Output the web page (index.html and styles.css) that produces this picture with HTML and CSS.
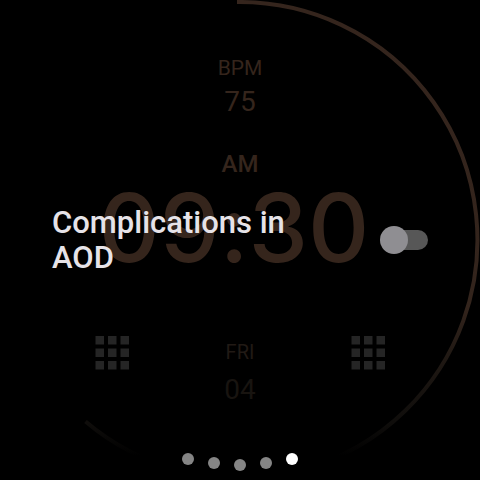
FILE: index.html
```html
<!DOCTYPE html>
<html lang="en">
<head>
<meta charset="utf-8">
<meta name="viewport" content="width=device-width, initial-scale=1">
<title>Watch face settings</title>
<link rel="stylesheet" href="styles.css">
</head>
<body>
<main class="screen">
  <svg class="ring" viewBox="0 0 480 480" aria-hidden="true">
    <defs>
      <linearGradient id="fade" gradientUnits="userSpaceOnUse" x1="0" y1="0" x2="0" y2="480">
        <stop offset="0" stop-color="#35251d"/>
        <stop offset=".64" stop-color="#33241c"/>
        <stop offset=".75" stop-color="#1f1813"/>
        <stop offset=".88" stop-color="#0f0d0b"/>
        <stop offset=".95" stop-color="#000"/>
      </linearGradient>
    </defs>
    <path d="M237 2A238 238 0 1 1 85.500 421.500" fill="none" stroke="url(#fade)" stroke-width="4"/>
  </svg>

  <section class="face">
    <div class="label">BPM</div>
    <div class="value">75</div>
    <div class="period">AM</div>
    <div class="time">09:30</div>
    <div class="bottom">
      <svg class="apps" viewBox="0 0 34 34" aria-hidden="true"><path d="M.5 0h8.500v8.500H.5zM13 0h8.500v8.500H13zM25.500 0H34v8.500h-8.500zM.5 12.500h8.500V21H.5zM13 12.500h8.500V21H13zM25.500 12.500H34V21h-8.500zM.5 25h8.500v8.500H.5zM13 25h8.500v8.500H13zM25.500 25H34v8.500h-8.500z"/></svg>
      <div class="date">
        <div class="weekday">FRI</div>
        <div class="day">04</div>
      </div>
      <svg class="apps" viewBox="0 0 34 34" aria-hidden="true"><path d="M.5 0h8.500v8.500H.5zM13 0h8.500v8.500H13zM25.500 0H34v8.500h-8.500zM.5 12.500h8.500V21H.5zM13 12.500h8.500V21H13zM25.500 12.500H34V21h-8.500zM.5 25h8.500v8.500H.5zM13 25h8.500v8.500H13zM25.500 25H34v8.500h-8.500z"/></svg>
    </div>
  </section>

  <div class="setting">
    <label class="setting-label" for="aod">Complications in AOD</label>
    <input class="switch" id="aod" type="checkbox" role="switch">
  </div>

  <ol class="pages" aria-label="Page 5 of 5">
    <li class="dot"></li>
    <li class="dot low"></li>
    <li class="dot lowest"></li>
    <li class="dot low"></li>
    <li class="dot current"></li>
  </ol>
</main>
</body>
</html>
```
FILE: styles.css
```css
* {
  box-sizing: border-box;
}

body {
  margin: 0;
  background: #000;
  color: #35251c;
  font-family: Roboto, "Liberation Sans", sans-serif;
}

.screen {
  display: grid;
  grid-template-columns: minmax(0, 1fr);
  min-height: 100vh;
}

.screen > * {
  grid-area: 1 / 1;
}

.ring {
  display: block;
  width: 100%;
}

.face {
  padding-top: 53px;
  text-align: center;
}

.label {
  font-size: 21px;
  line-height: 30px;
}

.value {
  font-size: 28px;
  line-height: 38px;
}

.period {
  margin-top: 29px;
  font-size: 24px;
  line-height: 28px;
  font-weight: 500;
}

.time {
  padding-right: 12px;
  font-family: Inter, Roboto, sans-serif;
  font-feature-settings: "calt" 0;
  font-size: 95px;
  line-height: 100px;
  font-weight: 500;
}

.bottom {
  display: flex;
  justify-content: space-between;
  align-items: flex-start;
  margin-top: 58px;
  padding: 0 95px;
}

.apps {
  width: 34px;
  height: 34px;
  fill: #252525;
}

.weekday {
  font-size: 20px;
  line-height: 32px;
  color: #211a15;
}

.day {
  font-size: 28px;
  line-height: 44px;
  color: #181410;
}

.setting {
  display: flex;
  align-items: center;
  gap: 40px;
  padding: 0 52px;
}

.setting-label {
  flex: 1;
  font-size: 31px;
  line-height: 35px;
  font-weight: 500;
  color: #e6e3e8;
}

.switch {
  appearance: none;
  display: grid;
  align-items: center;
  flex: none;
  width: 48px;
  height: 28px;
  margin: 0;
}

.switch::before,
.switch::after {
  content: "";
  grid-area: 1 / 1;
}

.switch::before {
  height: 20px;
  margin-left: 8px;
  border-radius: 10px;
  background: #575757;
}

.switch::after {
  width: 28px;
  height: 28px;
  border-radius: 50%;
  background: #8f8e92;
}

.switch:checked::after {
  justify-self: end;
}

.pages {
  display: flex;
  align-self: end;
  justify-content: center;
  gap: 14px;
  height: 27px;
  margin: 0;
  padding: 0;
  list-style: none;
}

.dot {
  width: 12px;
  height: 12px;
  border-radius: 50%;
  background: #858585;
}

.low {
  margin-top: 4px;
}

.lowest {
  margin-top: 6px;
}

.current {
  background: #fff;
}
```
